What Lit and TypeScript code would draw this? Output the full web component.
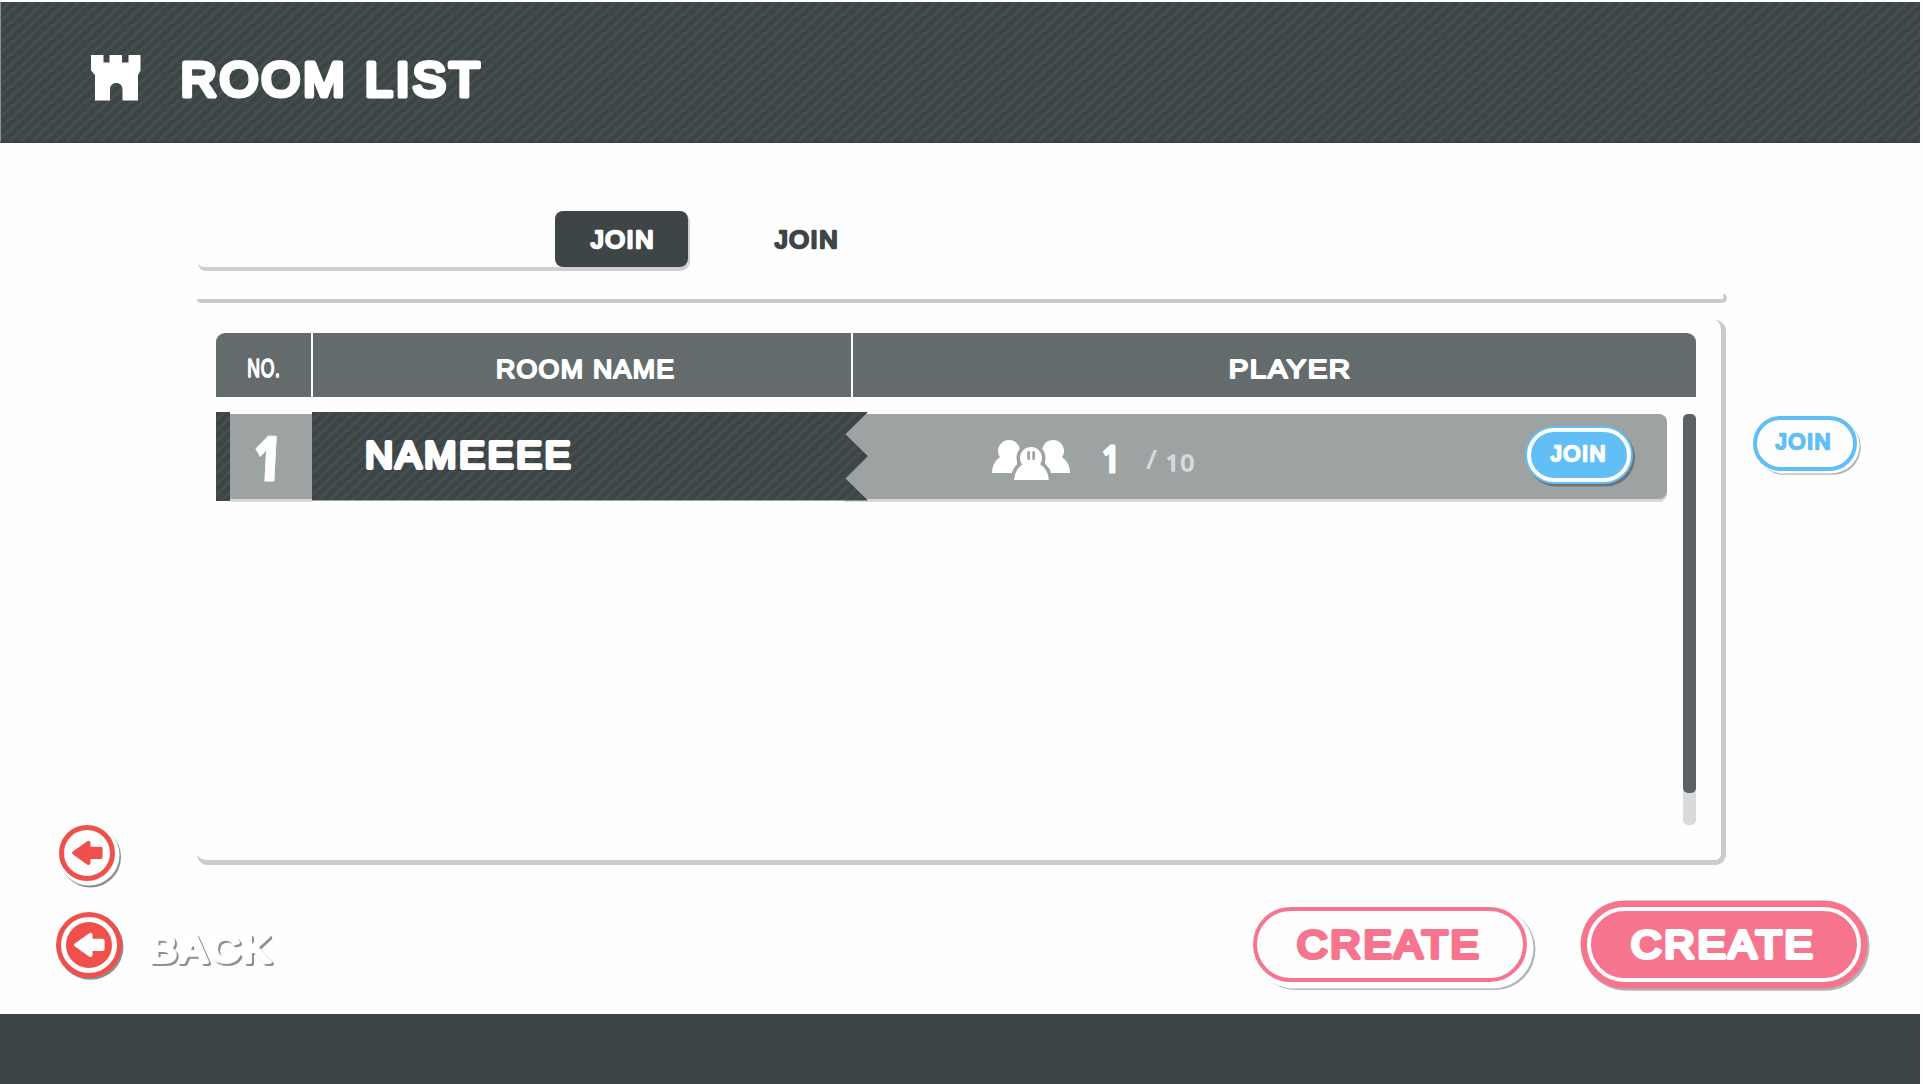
import { LitElement, html, svg, css } from "lit";
import { customElement, property } from "lit/decorators.js";

const pen = document.createElement("canvas").getContext("2d")!;

/** Rounded lettering fitted to a box: the outline stroke rounds every corner. */
@customElement("round-label")
class RoundLabel extends LitElement {
  @property() text = "";
  @property() family = "Liberation Sans";
  @property({ type: Number }) w = 100;
  @property({ type: Number }) h = 20;
  @property({ type: Number }) weight = 400;
  @property({ type: Number }) stroke = -1;

  static styles = css`
    :host { display: block; flex: none; line-height: 0; }
    .ink { display: block; overflow: visible; }
    .glyphs { fill: currentColor; stroke: currentColor; stroke-linejoin: round; stroke-linecap: round; }
  `;

  render() {
    const s = this.stroke < 0 ? this.h * 0.13 : this.stroke;
    const gap = s * 0.62;
    const n = this.text.length;
    pen.font = `${this.weight} 200px "${this.family}"`;
    const m = pen.measureText(this.text);
    const up = m.actualBoundingBoxAscent / 200;
    const down = m.actualBoundingBoxDescent / 200;
    const size = (this.h - s) / (up + down);
    const left = (-m.actualBoundingBoxLeft / 200) * size;
    const right = (m.actualBoundingBoxRight / 200) * size + (n - 1) * gap;
    const k = this.w / (right - left + s);
    return html`<svg class="ink" width=${this.w} height=${this.h}>
      <text class="glyphs" x=${k * (s / 2 - left)} y=${this.h - s / 2 - down * size}
        font-family=${`"${this.family}", sans-serif`} font-weight=${this.weight} font-size=${size}
        stroke-width=${s} letter-spacing=${gap} textLength=${((m.width / 200) * size + n * gap) * k}
        lengthAdjust="spacingAndGlyphs">${this.text}</text>
    </svg>`;
  }
}

@customElement("round-arrow")
class RoundArrow extends LitElement {
  static styles = css`
    :host { display: block; line-height: 0; }
    .shape { fill: currentColor; stroke: currentColor; stroke-width: 4; stroke-linejoin: round; }
  `;
  render() {
    return html`<svg width="31" height="26" viewBox="0 0 31 26">
      <path class="shape" d="M2.2 12.8 L16.5 2.8 V8.8 H28.6 V17 H16.5 V23 Z" />
    </svg>`;
  }
}

const castle = svg`<path fill="#fff" d="M0 0H12.5V7.5H18.5V0H31V7.5H37.5V0H49.5V15.5L47 20V45.5H31.5V34.5C31.5 30.5 28.8 28 25.2 28C21.6 28 19 30.5 19 34.5V45.5H4V20L0 15.5Z"/>`;

const people = svg`
  <g fill="#fff">
    <circle cx="17" cy="11" r="11"/><path d="M0 33C0 25 4 19 9.500 16.500H25V33Z"/>
    <circle cx="61" cy="11" r="11"/><path d="M78 33C78 25 74 19 68.500 16.500H53V33Z"/>
  </g>
  <g fill="#9da3a2" stroke="#9da3a2" stroke-width="7">
    <circle cx="39" cy="18" r="11"/><path d="M22 40C22.500 33 26 27 31 24H47.500C53 27 56.500 33 56.700 40Z"/>
  </g>
  <g fill="#fff">
    <circle cx="39" cy="18" r="11"/><path d="M22 40C22.500 33 26 27 31 24H47.500C53 27 56.500 33 56.700 40Z"/>
  </g>
  <g fill="#9da3a2"><rect x="35.300" y="11" width="2.700" height="9" rx="1.300"/><rect x="40.300" y="11" width="2.700" height="9" rx="1.300"/></g>`;

@customElement("app-root")
class AppRoot extends LitElement {
  static styles = css`
    :host {
      display: flex; flex-direction: column; width: 1923px; height: 1084px;
      box-sizing: border-box; overflow: hidden; background: #fefefe; color: #fff;
      font-family: "Liberation Sans", sans-serif;
    }
    * { box-sizing: border-box; }
    svg { display: block; flex: none; overflow: visible; }
    .striped {
      background: repeating-linear-gradient(137deg, #3d4546 0, #3d4546 4.3px, #454e4e 5.1px, #454e4e 7px, #3d4546 7.8px);
    }
    .header {
      flex: none; display: flex; align-items: flex-start; width: 1920px; height: 141px; margin-top: 2px;
      padding: 53px 0 0 90px; border-left: 1px solid #8d9394; border-bottom: 2px solid #394142;
    }
    .title { margin: 4px 0 0 41px; }
    .main { flex: none; display: flex; height: 745px; }
    .left { width: 197px; display: flex; align-items: flex-end; padding-left: 59px; }
    .center { width: 1530px; }
    .right { padding: 273px 0 0 26px; }
    .tabs { display: flex; margin: 68px 0 0 1px; }
    .strip {
      width: 491.5px; height: 60px; display: flex; justify-content: flex-end;
      border-right: 2px solid #cfcfcf; border-bottom: 4px solid #cfcfcf; border-radius: 0 12px 10px 8px;
    }
    .tab {
      width: 132.500px; height: 56px; display: flex; align-items: flex-start; padding: 19px 0 0 35px;
      border-radius: 8px; background: #3d4546;
    }
    .tab-plain { padding: 19px 0 0 84.500px; color: #3d4546; }
    .rule {
      height: 9px; margin-top: 23px; border-right: 4px solid #c8cccc; border-bottom: 4px solid #c8cccc;
      border-radius: 0 4px 5px 4px;
    }
    .panel {
      width: 1529px; height: 545px; margin-top: 17px; padding: 13px 0 0 19px;
      border-right: 5px solid #c8cccc; border-bottom: 5px solid #c8cccc; border-radius: 0 11px 11px 11px;
    }
    .thead { display: flex; gap: 2px; width: 1480px; height: 64px; border-radius: 9px 9px 0 0; overflow: hidden; }
    .th { display: flex; align-items: flex-start; justify-content: center; padding-top: 25.500px; background: #646b6c; }
    .th-no { width: 95px; }
    .th-name { width: 538px; padding-left: 7px; }
    .th-player { flex: 1; padding-left: 30.500px; }
    .body { display: flex; align-items: flex-start; margin-top: 15px; }
    .row { display: flex; width: 1451px; height: 90px; }
    .edge { width: 13.500px; height: 88.500px; }
    .no {
      width: 82px; height: 85px; margin-top: 1.500px; padding: 21.500px 0 0 25.500px;
      background: #9da3a2; box-shadow: 0 3px 0 #d8dad9;
    }
    .skew { transform: skewX(-3deg); }
    .info {
      flex: 1; height: 85px; margin: 1.500px 0 0 -24px; display: flex; align-items: flex-start;
      background: #9da3a2; border-radius: 0 8px 8px 0; box-shadow: 0 3px 0 #d8dad9; padding-left: 148px;
    }
    .name {
      width: 556.500px; height: 88.500px; padding: 29px 0 0 54.500px; z-index: 1;
      clip-path: polygon(0 0, 100% 0, calc(100% - 22.500px) 25%, 100% 50%, calc(100% - 22.500px) 75%, 100% 100%, 0 100%);
    }
    .people { margin-top: 26.500px; }
    .count { margin: 30.500px 0 0 33px; }
    .slash { margin: 36.500px 0 0 30.500px; color: #d8dada; }
    .cap { margin: 41px 0 0 9.500px; color: #d8dada; }
    .track { width: 13px; height: 411px; margin: 2px 0 0 16px; border-radius: 5px; background: #d9dadb; }
    .thumb { height: 378.500px; border-radius: 5px; background: #5a6263; }
    .pill { flex: none; display: flex; align-items: flex-start; justify-content: center; border-radius: 60px; }
    .join-fill {
      width: 104px; height: 54px; margin: 14px 0 0 333.500px; padding: 12px 3px 0 0;
      background: #61bff5; border: 4px solid #fff; box-shadow: 0 0 0 2px #61bff5, 2px 2.500px 0 2px #6e7475;
    }
    .join-line {
      width: 103.500px; height: 54.500px; padding: 12px 4px 0 0; color: #61bff5;
      background: #fefefe; border: 4px solid #61bff5;
      box-shadow: 2px 2px 0 .5px #fefefe, 3.500px 3.500px 0 .3px #afb2b2;
    }
    .actions { flex: none; display: flex; align-items: flex-start; height: 126px; padding-left: 56px; }
    .circle { flex: none; display: flex; align-items: center; border-radius: 50%; }
    .circle-line {
      width: 56px; height: 56px; padding-left: 7.500px; margin-bottom: 7px; color: #ef504b;
      background: #fefefe; border: 5px solid #ef504b;
      box-shadow: 2px 2px 0 2.500px #fefefe, 3.500px 4px 0 2.500px #8b9192;
    }
    .circle-fill {
      width: 56px; height: 56px; margin: 28.500px 0 0 5px; padding-left: 7.500px;
      background: #ef504b; border: 5px solid #fff;
      box-shadow: 0 0 0 5px #ef504b, 1.500px 1.800px 0 5px #8b9192;
    }
    .back { margin: 45.500px 0 0 33px; filter: drop-shadow(2px 2px 0 #8b9192); }
    .create-line {
      width: 274px; height: 75px; margin: 19px 0 0 981px; padding: 18px 4px 0 0; color: #f7748f;
      background: #fefefe; border: 4px solid #f7748f;
      box-shadow: 3.500px 3.500px 0 3px #fefefe, 5.500px 5px 0 3px #b0b5b5;
    }
    .create-fill {
      width: 273.500px; height: 74.500px; margin: 19px 0 0 60px; padding: 18px 4px 0 0;
      background: #f7748f; border: 4px solid #fff;
      box-shadow: 0 0 0 6.500px #f7748f, 1.800px 2px 0 6.800px #b0b5b5;
    }
    .footer { flex: none; width: 1920px; height: 70px; background: #3d4546; }
  `;

  render() {
    return html`
      <div class="header striped">
        <svg width="50" height="46">${castle}</svg>
        <round-label class="title" text="ROOM LIST" w="299" h="40"></round-label>
      </div>
      <div class="main">
        <div class="left"><div class="circle circle-line"><round-arrow></round-arrow></div></div>
        <div class="center">
          <div class="tabs">
            <div class="strip"><div class="tab"><round-label text="JOIN" w="63" h="20"></round-label></div></div>
            <div class="tab-plain"><round-label text="JOIN" w="63" h="20"></round-label></div>
          </div>
          <div class="rule"></div>
          <div class="panel">
            <div class="thead">
              <div class="th th-no"><round-label text="NO." w="31" h="19.5" stroke="1.7"></round-label></div>
              <div class="th th-name"><round-label text="ROOM NAME" w="177" h="20" stroke="2"></round-label></div>
              <div class="th th-player"><round-label text="PLAYER" w="120" h="20" stroke="2"></round-label></div>
            </div>
            <div class="body">
              <div class="row">
                <div class="edge striped"></div>
                <div class="no"><round-label class="skew" text="1" family="Open Sans" weight="800" w="20.5" h="46" stroke="0.8"></round-label></div>
                <div class="name striped"><round-label text="NAMEEEE" w="205" h="29"></round-label></div>
                <div class="info">
                  <svg class="people" width="78" height="40">${people}</svg>
                  <round-label class="count" text="1" family="Open Sans" weight="600" w="12.5" h="29" stroke="3"></round-label>
                  <round-label class="slash" text="/" w="11" h="19" stroke="0.2"></round-label>
                  <round-label class="cap" text="10" family="Open Sans" weight="500" w="27" h="17" stroke="1.6"></round-label>
                  <div class="pill join-fill"><round-label text="JOIN" w="55" h="18"></round-label></div>
                </div>
              </div>
              <div class="track"><div class="thumb"></div></div>
            </div>
          </div>
        </div>
        <div class="right"><div class="pill join-line"><round-label text="JOIN" w="55" h="18"></round-label></div></div>
      </div>
      <div class="actions">
        <div class="circle circle-fill"><round-arrow></round-arrow></div>
        <round-label class="back" text="BACK" w="122" h="30.5"></round-label>
        <div class="pill create-line"><round-label text="CREATE" w="182" h="31.5"></round-label></div>
        <div class="pill create-fill"><round-label text="CREATE" w="182" h="31.5"></round-label></div>
      </div>
      <div class="footer"></div>
    `;
  }
}
